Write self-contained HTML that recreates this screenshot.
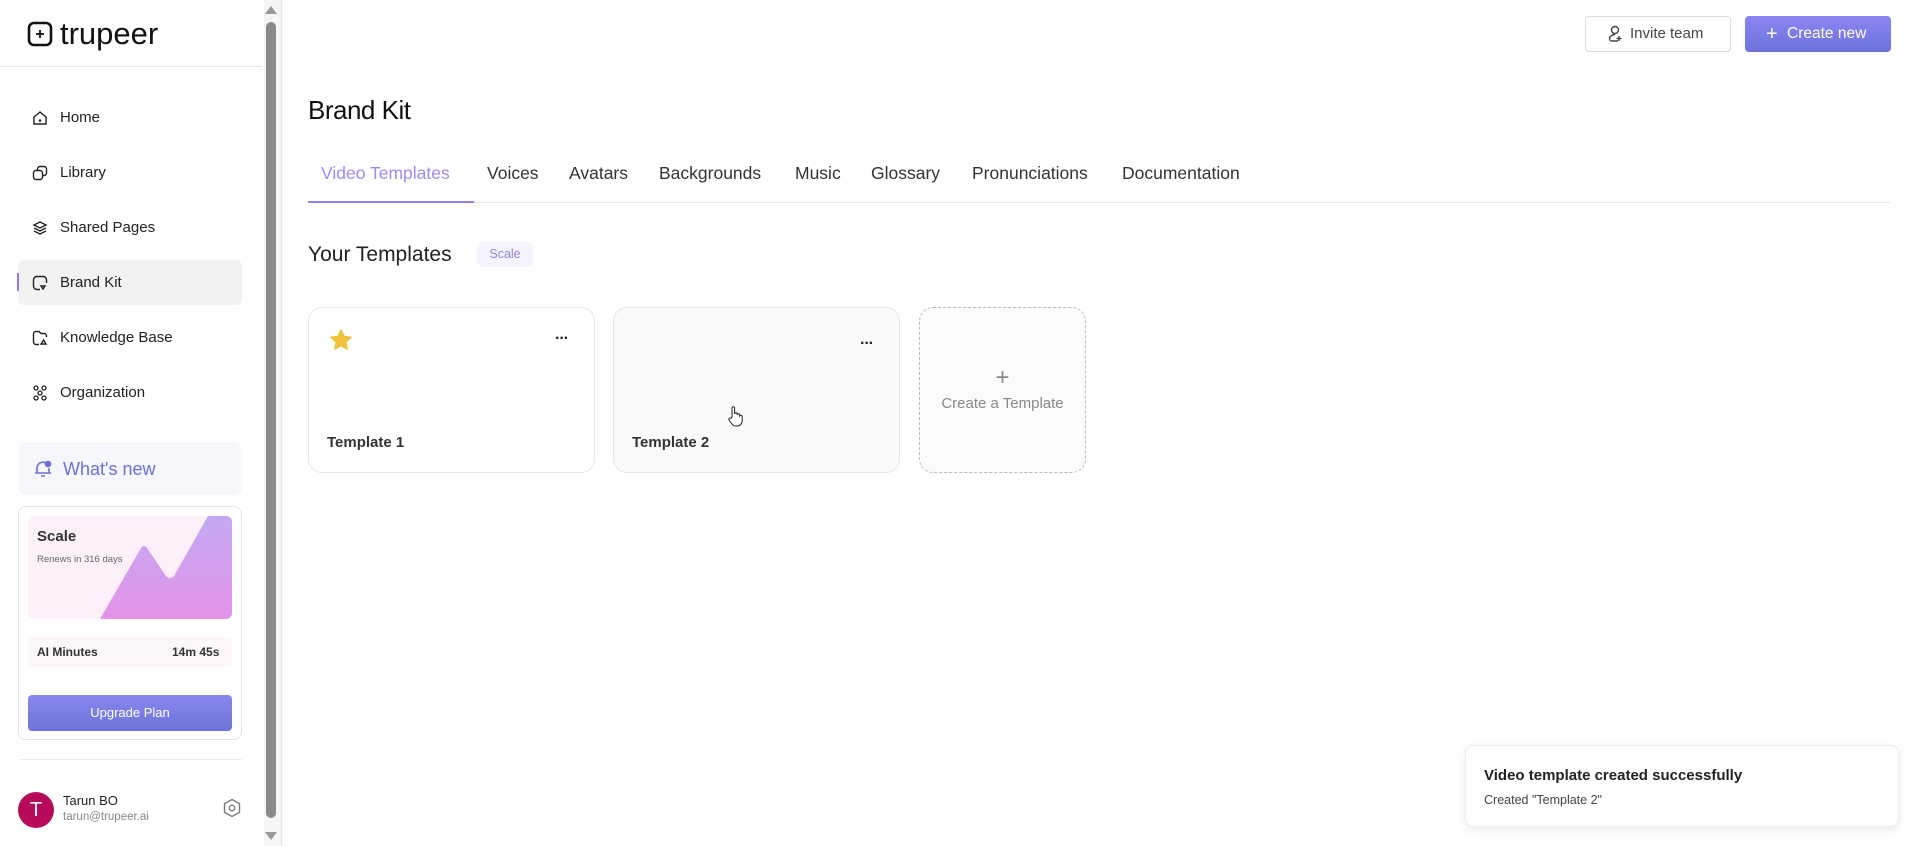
<!DOCTYPE html>
<html><head><meta charset="utf-8"><style>
*{box-sizing:border-box;margin:0;padding:0}
body{width:1920px;height:846px;overflow:hidden;background:#fff;font-family:"Liberation Sans",sans-serif;color:#1f1f24;position:relative}
.abs{position:absolute}
.side{left:0;top:0;width:264px;height:846px;background:#fff}
.nav{position:absolute;left:18px;width:224px;height:45px;display:flex;align-items:center;padding-left:14px;font-size:15px;color:#222}
.nav svg{margin-right:12px}
.tab{position:absolute;top:163px;font-size:17.5px;color:#333}
.card{position:absolute;top:307px;width:287px;height:166px;border:1.5px solid #e6e6e9;border-radius:14px;background:#fff}
.card .t{position:absolute;left:18px;top:126px;font-size:15px;font-weight:bold;color:#333}
.dots{position:absolute;font-size:16px;font-weight:bold;letter-spacing:-1px;color:#222}
</style></head><body>
<div class="abs side">
  <svg class="abs" style="left:27px;top:21px" width="26" height="26" viewBox="0 0 26 26"><rect x="2" y="2" width="22" height="22" rx="5" fill="none" stroke="#111" stroke-width="2.6"/><path d="M13 9v8M9 13h8" stroke="#111" stroke-width="1.8"/></svg>
  <div class="abs" style="left:60px;top:16px;font-size:31px;color:#111;letter-spacing:0px">trupeer</div>
  <div class="abs" style="left:0;top:66px;width:262px;height:1px;background:#e6e6e6"></div>
  <div class="nav" style="top:95px"><svg width="16" height="16" viewBox="0 0 16 16" fill="none" stroke="#222" stroke-width="1.4"><path d="M2 7l6-5 6 5v7H2z"/><circle cx="8" cy="10.5" r=".6" fill="#222"/></svg>Home</div>
  <div class="nav" style="top:150px"><svg width="16" height="16" viewBox="0 0 16 16" fill="none" stroke="#222" stroke-width="1.4"><rect x="1.5" y="5.5" width="9" height="9" rx="2.5"/><path d="M5.5 5V4a2.5 2.5 0 012.5-2.5h4A2.5 2.5 0 0114.5 4v4a2.5 2.5 0 01-2.5 2.5h-1"/></svg>Library</div>
  <div class="nav" style="top:205px"><svg width="16" height="16" viewBox="0 0 16 16" fill="none" stroke="#222" stroke-width="1.4"><path d="M8 2l6 3-6 3-6-3zM2 8l6 3 6-3M2 11l6 3 6-3"/></svg>Shared Pages</div>
  <div class="nav" style="top:260px;background:#f2f2f3;border-radius:6px"><svg width="16" height="16" viewBox="0 0 16 16" fill="none" stroke="#222" stroke-width="1.4"><path d="M8 14.5H5A3.5 3.5 0 011.5 11V5A3.5 3.5 0 015 1.5h6A3.5 3.5 0 0114.5 5v3"/><path d="M9 11l2 3 2-3z"/></svg>Brand Kit</div>
  <div class="abs" style="left:17px;top:273px;width:2px;height:18px;background:#8b7cf6"></div>
  <div class="nav" style="top:315px"><svg width="16" height="16" viewBox="0 0 16 16" fill="none" stroke="#222" stroke-width="1.4"><path d="M7 14.5H4A2.5 2.5 0 011.5 12V4A2.5 2.5 0 014 1.5h3l2 2h3A2.5 2.5 0 0114.5 6v1"/><path d="M9 14l2.5-4 2.5 4z"/></svg>Knowledge Base</div>
  <div class="nav" style="top:370px"><svg width="16" height="16" viewBox="0 0 16 16" fill="none" stroke="#222" stroke-width="1.3"><circle cx="4" cy="3" r="2"/><circle cx="12" cy="3" r="2"/><circle cx="8" cy="8" r="2"/><circle cx="4" cy="13" r="2"/><circle cx="12" cy="13" r="2"/></svg>Organization</div>
  <div class="abs" style="left:18px;top:442px;width:224px;height:53px;background:#f6f6fd;border-radius:8px"></div>
  <svg class="abs" style="left:33px;top:459px" width="20" height="20" viewBox="0 0 20 20" fill="none" stroke="#6b6fd8" stroke-width="1.6"><path d="M4 14V9a6 6 0 019-5M16 9v5M2 14h16M8 17h4"/><circle cx="15" cy="5" r="2.5" fill="#6b6fd8"/></svg>
  <div class="abs" style="left:63px;top:459px;font-size:18px;color:#6b6fd8">What's new</div>
  <div class="abs" style="left:18px;top:506px;width:224px;height:234px;border:1px solid #e4e4e8;border-radius:8px"></div>
  <div class="abs" style="left:28px;top:516px;width:204px;height:103px;border-radius:6px;background:#fdf0fa;overflow:hidden">
    <svg width="204" height="103" class="abs" style="left:0;top:0"><defs><linearGradient id="g" x1="0" y1="0" x2="0" y2="1"><stop offset="0" stop-color="#c2a9f3"/><stop offset="1" stop-color="#e594e8"/></linearGradient></defs><path d="M72 103L113 32 Q116 28 119 32L138 60 Q142 64 146 60L180 0H204V103Z" fill="url(#g)"/></svg>
    <div class="abs" style="left:9px;top:12px;font-size:15px;font-weight:bold;color:#333">Scale</div>
    <div class="abs" style="left:9px;top:38px;font-size:9.5px;color:#666">Renews in 316 days</div>
  </div>
  <div class="abs" style="left:28px;top:637px;width:204px;height:30px;background:#fdf7fb;border-radius:4px"></div>
  <div class="abs" style="left:37px;top:645px;font-size:12px;font-weight:bold;color:#333">AI Minutes</div>
  <div class="abs" style="left:172px;top:645px;font-size:12px;font-weight:bold;color:#333">14m 45s</div>
  <div class="abs" style="left:28px;top:695px;width:204px;height:36px;border-radius:4px;background:linear-gradient(#8788f0,#6d74d8);color:#fff;font-size:13px;text-align:center;line-height:36px">Upgrade Plan</div>
  <div class="abs" style="left:20px;top:759px;width:222px;height:1px;background:#ececec"></div>
  <div class="abs" style="left:18px;top:792px;width:36px;height:36px;border-radius:50%;background:#b80a5a;color:#fff;font-size:20px;text-align:center;line-height:36px">T</div>
  <div class="abs" style="left:63px;top:793px;font-size:13px;color:#222">Tarun BO</div>
  <div class="abs" style="left:63px;top:811px;font-size:11.5px;color:#888">tarun@trupeer.ai</div>
  <svg class="abs" style="left:222px;top:798px" width="20" height="20" viewBox="0 0 20 20" fill="none" stroke="#777" stroke-width="1.3"><path d="M10 1.5l7.5 4.3v8.4L10 18.5l-7.5-4.3V5.8z"/><circle cx="10" cy="10" r="2.7"/></svg>
</div>
<div class="abs" style="left:264px;top:0;width:18px;height:846px;background:#f5f5f5;border-right:1px solid #e8e8e8"></div>
<div class="abs" style="left:266px;top:22px;width:10px;height:796px;background:#8a8a8a;border-radius:5px"></div>
<div class="abs" style="left:265px;top:6px;width:0;height:0;border-left:6px solid transparent;border-right:6px solid transparent;border-bottom:8px solid #999"></div>
<div class="abs" style="left:265px;top:832px;width:0;height:0;border-left:6px solid transparent;border-right:6px solid transparent;border-top:8px solid #999"></div>

<div class="abs" style="left:1585px;top:16px;width:146px;height:36px;border:1px solid #dcdce0;border-radius:4px;font-size:15px;color:#444;line-height:34px;padding-left:44px">Invite team</div>
<svg class="abs" style="left:1608px;top:25px" width="14" height="18" viewBox="0 0 14 18" fill="none" stroke="#444" stroke-width="1.4"><circle cx="7" cy="5" r="3.5"/><path d="M10 16H4a2.5 2.5 0 01-1-4.8A5 5 0 017 9.5"/><path d="M11 11v5M8.5 13.5h5"/></svg>
<div class="abs" style="left:1745px;top:16px;width:146px;height:36px;border-radius:4px;background:linear-gradient(#8a86f4,#6d72dc);color:#fff;font-size:15.5px;line-height:36px;padding-left:42px">Create new</div>
<div class="abs" style="left:1766px;top:24px;color:#fff;font-size:20px;line-height:20px">+</div>

<div class="abs" style="left:308px;top:95px;font-size:26px;color:#111;letter-spacing:-0.5px">Brand Kit</div>
<div class="tab" style="left:321px;color:#9a8cf0">Video Templates</div>
<div class="tab" style="left:487px">Voices</div>
<div class="tab" style="left:569px">Avatars</div>
<div class="tab" style="left:659px">Backgrounds</div>
<div class="tab" style="left:795px">Music</div>
<div class="tab" style="left:871px">Glossary</div>
<div class="tab" style="left:972px">Pronunciations</div>
<div class="tab" style="left:1122px">Documentation</div>
<div class="abs" style="left:308px;top:202px;width:1582px;height:1px;background:#e6e6e8"></div>
<div class="abs" style="left:308px;top:201px;width:166px;height:2px;background:#8d84ef"></div>
<div class="abs" style="left:308px;top:243px;font-size:21px;color:#222">Your Templates</div>
<div class="abs" style="left:477px;top:242px;width:56px;height:25px;border-radius:6px;background:#f5f4fe;color:#8a86e0;font-size:12.5px;text-align:center;line-height:25px">Scale</div>

<div class="card" style="left:308px"><div class="t">Template 1</div><div class="dots" style="left:246px;top:22px">···</div>
<svg class="abs" style="left:20px;top:20px" width="24" height="24" viewBox="0 0 24 24"><path d="M12 2l3 6.5 7 .8-5.2 4.8 1.5 7L12 17.5 5.7 21.1l1.5-7L2 9.3l7-.8z" fill="#f0c23c" stroke="#f0c23c" stroke-linejoin="round" stroke-width="1.5"/></svg></div>
<div class="card" style="left:613px;background:#fafafb"><div class="t">Template 2</div><div class="dots" style="left:246px;top:27px">···</div></div>
<div class="abs" style="left:919px;top:307px;width:167px;height:166px;border:1.5px dashed #bbb;border-radius:14px;background:#fbfbfb;text-align:center;color:#888">
  <div style="margin-top:60px;font-size:24px;line-height:20px;font-weight:300">+</div>
  <div style="margin-top:7px;font-size:15px">Create a Template</div>
</div>
<svg class="abs" style="left:727px;top:405px" width="16" height="22" viewBox="0 0 16 22" fill="#fff" stroke="#222" stroke-width="1"><path d="M5 12V3a1.3 1.3 0 012.6 0v6a1.3 1.3 0 012.6 0v1a1.3 1.3 0 012.6 0v1a1.3 1.3 0 012.4.5V16a5 5 0 01-5 5H9a5 5 0 01-4-2l-3-4a1.3 1.3 0 012-1.6z"/></svg>

<div class="abs" style="left:1465px;top:745px;width:434px;height:82px;background:#fff;border:1px solid #ececec;border-radius:8px;box-shadow:0 3px 10px rgba(0,0,0,.08)">
  <div class="abs" style="left:18px;top:21px;font-size:15px;font-weight:bold;color:#222">Video template created successfully</div>
  <div class="abs" style="left:18px;top:47px;font-size:12.5px;color:#444">Created "Template 2"</div>
</div>
</body></html>
